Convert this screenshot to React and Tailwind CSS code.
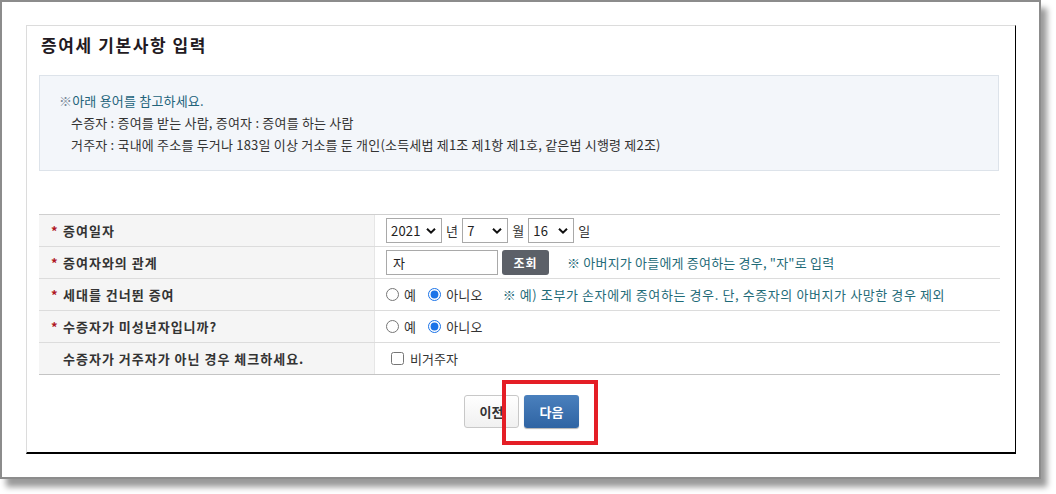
import { useState } from "react";

const FONT = { fontFamily: '"Noto Sans CJK KR", "Noto Sans", sans-serif' };

const Chevron = () => (
  <svg width="10" height="7" viewBox="0 0 10 7" className="pointer-events-none absolute right-[6px] top-1/2 -translate-y-1/2">
    <path d="M1 1.2l4 4 4-4" fill="none" stroke="#111" strokeWidth="2" />
  </svg>
);

const Select = ({ value, options, width }) => (
  <div className="relative" style={{ width }}>
    <select
      defaultValue={value}
      className="h-[25px] w-full appearance-none border border-[#a9a9a9] bg-white pl-[4px] text-[13px] text-[#222] outline-none"
    >
      {options.map((o) => (
        <option key={o}>{o}</option>
      ))}
    </select>
    <Chevron />
  </div>
);

const Row = ({ label, required = true, children }) => (
  <div className="flex h-[32px] border-b border-[#dcdcdc]">
    <div className="flex w-[336px] items-center border-r border-[#e6e6e6] bg-[#f5f5f5] pl-[12px] text-[13px] font-bold tracking-[1px] text-[#333]">
      <span className="w-[12px] text-[#b0171f]">{required ? "*" : ""}</span>
      <span>{label}</span>
    </div>
    <div className="flex flex-1 items-center pl-[11px] text-[13px] tracking-[0.2px] text-[#333]">{children}</div>
  </div>
);

const YesNo = ({ name }) => (
  <div className="flex items-center">
    <label className="flex items-center gap-[5px]">
      <input type="radio" name={name} className="m-0 h-[13px] w-[13px] accent-[#1a73e8]" />
      <span>예</span>
    </label>
    <label className="ml-[12px] flex items-center gap-[5px]">
      <input type="radio" name={name} defaultChecked className="m-0 h-[13px] w-[13px] accent-[#1a73e8]" />
      <span>아니오</span>
    </label>
  </div>
);

export default function App() {
  const [relation, setRelation] = useState("자");

  return (
    <div className="h-[494px] w-[1056px] bg-white" style={FONT}>
      <div className="h-[479px] w-[1041px] border-2 border-[#8c8c8c] bg-white pl-[24px] pt-[23px] shadow-[6px_8px_6px_rgba(0,0,0,0.4)]">
        <div className="flex h-[429px] w-[990px] flex-col border-t border-l border-t-[#dcdcdc] border-l-[#dcdcdc] border-r border-r-black border-b-2 border-b-black pl-[12px]">
          <h1 className="pl-[2px] pt-[8px] text-[17px] font-bold leading-[22px] tracking-[1.6px] text-[#231a22]">증여세 기본사항 입력</h1>

          <div className="mt-[19px] h-[96px] w-[960px] border border-[#dde3ea] bg-[#f3f6fa] pl-[19px] pt-[14px] text-[13px] leading-[22px] tracking-[0.2px]">
            <p className="text-[#22637a]">
              <span className="text-[#7a8a99]">※</span>아래 용어를 참고하세요.
            </p>
            <p className="pl-[12px] text-[#333]">수증자 : 증여를 받는 사람, 증여자 : 증여를 하는 사람</p>
            <p className="pl-[12px] text-[#333]">거주자 : 국내에 주소를 두거나 183일 이상 거소를 둔 개인(소득세법 제1조 제1항 제1호, 같은법 시행령 제2조)</p>
          </div>

          <div className="mt-[43px] w-[961px] border-t border-[#cfcfcf]">
            <Row label="증여일자">
              <Select value="2021" options={["2021", "2020", "2019"]} width={56} />
              <span className="mx-[4px]">년</span>
              <Select value="7" options={["1", "2", "3", "4", "5", "6", "7", "8", "9", "10", "11", "12"]} width={46} />
              <span className="mx-[4px]">월</span>
              <Select value="16" options={["15", "16", "17"]} width={46} />
              <span className="mx-[4px]">일</span>
            </Row>
            <Row label="증여자와의 관계">
              <input
                value={relation}
                onChange={(e) => setRelation(e.target.value)}
                className="h-[25px] w-[112px] border border-[#a9a9a9] bg-white px-[6px] text-[13px] text-[#222] outline-none"
              />
              <button type="button" className="ml-[4px] h-[25px] w-[47px] rounded-[3px] bg-[#5c6068] text-[12px] font-bold tracking-[1px] text-white">
                조회
              </button>
              <span className="ml-[18px] text-[#1f6b78]">※ 아버지가 아들에게 증여하는 경우, "자"로 입력</span>
            </Row>
            <Row label="세대를 건너뛴 증여">
              <YesNo name="skip" />
              <span className="ml-[20px] tracking-[0.6px] text-[#1f6b78]">※ 예) 조부가 손자에게 증여하는 경우. 단, 수증자의 아버지가 사망한 경우 제외</span>
            </Row>
            <Row label="수증자가 미성년자입니까?">
              <YesNo name="minor" />
            </Row>
            <div className="border-b border-[#c4c4c4]">
              <div className="flex h-[31px]">
                <div className="flex w-[336px] items-center border-r border-[#e6e6e6] bg-[#f5f5f5] pl-[24px] text-[13px] font-bold tracking-[1px] text-[#333]">
                  수증자가 거주자가 아닌 경우 체크하세요.
                </div>
                <label className="flex flex-1 items-center gap-[6px] pl-[16px] text-[13px] text-[#333]">
                  <input type="checkbox" className="m-0 h-[13px] w-[13px]" />
                  <span>비거주자</span>
                </label>
              </div>
            </div>
          </div>

          <div className="relative mt-[20px] flex w-[961px] justify-center gap-[5px] pl-[4px]">
            <button type="button" className="h-[33px] w-[55px] rounded-[3px] border border-[#c8c8c8] bg-gradient-to-b from-white to-[#f0f0f0] text-[13px] font-bold text-[#333]">
              이전
            </button>
            <button type="button" className="h-[33px] w-[55px] rounded-[3px] bg-gradient-to-b from-[#4a80bd] to-[#2f64a3] text-[13px] font-bold text-white shadow-[0_1px_1px_rgba(0,0,0,0.3)]">
              다음
            </button>
            <div className="pointer-events-none absolute left-[463px] top-[-15px] h-[65px] w-[96px] border-[4px] border-[#e41e26]" />
          </div>
        </div>
      </div>
    </div>
  );
}
